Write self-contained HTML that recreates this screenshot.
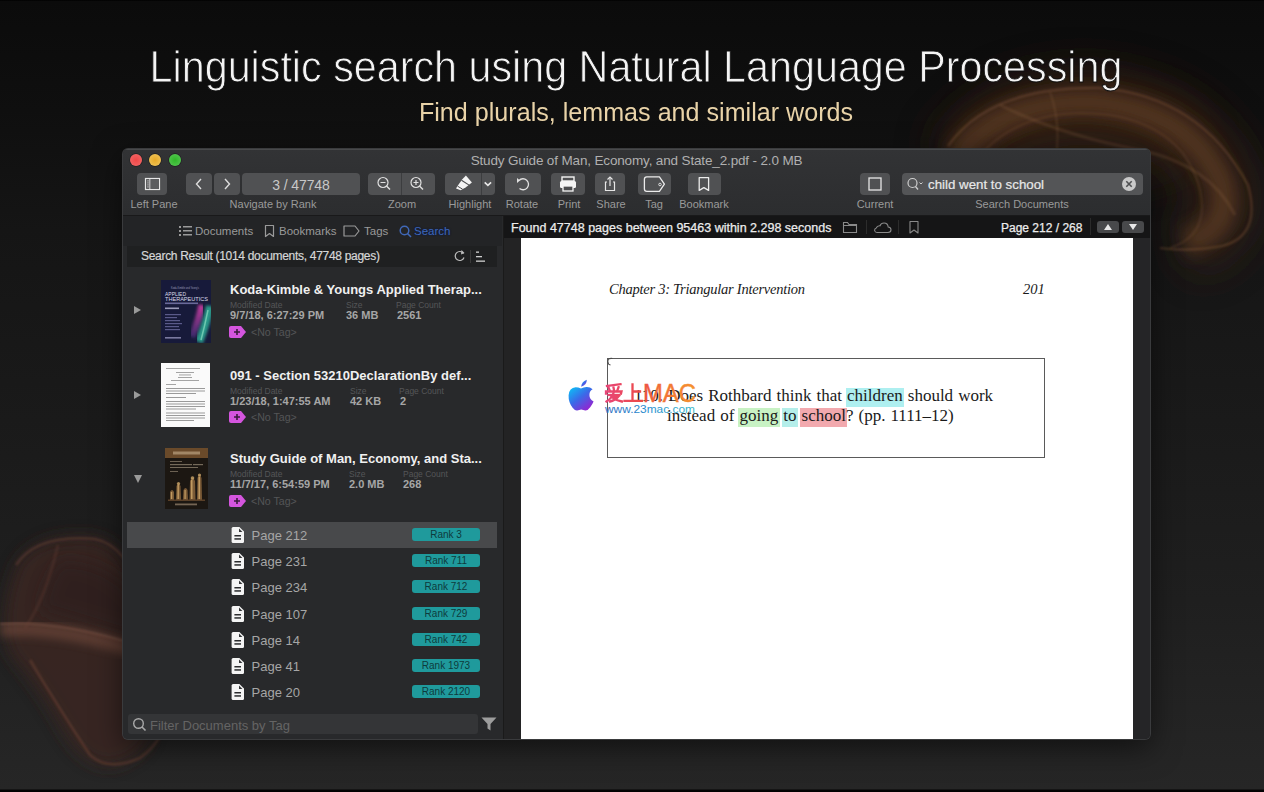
<!DOCTYPE html>
<html><head><meta charset="utf-8">
<style>
*{box-sizing:border-box;margin:0;padding:0}
html,body{width:1264px;height:792px;overflow:hidden}
body{position:relative;font-family:"Liberation Sans",sans-serif;background:linear-gradient(to bottom,#000 0px,#0b0b0b 1.5px,#0f0f0f 110px,#151515 230px,#1a1a1a 420px,#1f1f1f 600px,#262626 789px,#040404 790px,#000 792px)}
.a{position:absolute;white-space:nowrap}
#title{left:4px;width:1264px;top:41px;text-align:center;color:#f4f4f4;font-size:44px;line-height:52px;transform:scaleX(0.938);-webkit-text-stroke:0.9px #0f0f0f}
#sub{left:4px;width:1264px;top:95px;text-align:center;color:#e9d3a8;font-size:26px;line-height:34px;transform:scaleX(0.966)}
#win{left:123px;top:149px;width:1027px;height:590px;background:#28292b;border-radius:5px;overflow:hidden;box-shadow:0 0 0 1px #3a3b3d,0 8px 30px rgba(0,0,0,0.55)}
#tb{left:0;top:0;width:1027px;height:66px;background:linear-gradient(#323335,#2c2d2f);box-shadow:inset 0 1px 0 #48494b}
.dot{position:absolute;top:5px;width:12px;height:12px;border-radius:50%;box-shadow:0 0 0 0.7px rgba(0,0,0,0.35)}
.wtitle{left:0;width:1027px;top:3px;text-align:center;color:#b0b0b0;font-size:13.5px;line-height:16px;letter-spacing:-0.15px;top:4px}
.btn{position:absolute;top:24px;height:22px;background:#505153;border-radius:4px}
.btn svg{position:absolute;left:0;top:0}
.lbl{position:absolute;top:48px;width:120px;margin-left:-60px;color:#9a9a9a;font-size:11px;line-height:14px;text-align:center;white-space:nowrap}
#lp{left:0;top:66px;width:379px;height:524px;background:#28292b}
.tab{top:9px;color:#9a9a9a;font-size:11.5px;line-height:14px}
.tri{width:0;height:0;border-left:7px solid #9a9a9a;border-top:4.5px solid transparent;border-bottom:4.5px solid transparent}
.trid{width:0;height:0;border-top:8px solid #9a9a9a;border-left:4.5px solid transparent;border-right:4.5px solid transparent}
.dt{color:#f0f0f0;font-size:13px;font-weight:bold;line-height:16px}
.ml{color:#555658;font-size:8.5px;line-height:10px}
.mv{color:#a6a6a6;font-size:11px;font-weight:bold;line-height:13px}
.nt{color:#545557;font-size:10.6px;line-height:12px}
.pg{color:#a6a6a6;font-size:13px;line-height:26px;margin-top:1px}
.rk{width:68px;height:13px;background:#1f9a9c;border-radius:3px;color:#0e3b3c;font-size:10px;line-height:13px;text-align:center}
.cov1{background:linear-gradient(160deg,#1e2250 0%,#1a1e44 40%,#2a3a60 60%,#5a2a6a 75%,#2a6a6a 85%,#1a2a40 100%)}
.cov2{background:#fafafa}
.cov3{background:linear-gradient(#5a3a20 0%,#5a3a20 18%,#1e1a16 20%,#2a2218 60%,#6a4a28 80%,#2a2015 100%)}
#ct{left:380px;top:66px;width:647px;height:524px;background:#232324;border-left:1px solid #1a1a1a}
.ser{font-family:"Liberation Serif",serif;color:#1a1a1a;word-spacing:0.8px}
.hl{padding:0 1.5px 2px;margin:0 -1.5px}
</style></head><body>
<svg class="a" style="left:0;top:0" width="1264" height="792">
<defs>
<filter id="b8" x="-30%" y="-30%" width="160%" height="160%"><feGaussianBlur stdDeviation="8"/></filter>
<filter id="b4" x="-30%" y="-30%" width="160%" height="160%"><feGaussianBlur stdDeviation="4"/></filter>
<filter id="b1" x="-20%" y="-20%" width="140%" height="140%"><feGaussianBlur stdDeviation="1.2"/></filter>
<filter id="b20" x="-50%" y="-50%" width="200%" height="200%"><feGaussianBlur stdDeviation="20"/></filter>
</defs>
<g>
<ellipse cx="1085" cy="140" rx="115" ry="45" fill="#3a2618" opacity="0.55" filter="url(#b20)"/>
<path d="M955 165 Q995 100 1090 100 Q1190 108 1222 178 Q1238 228 1185 245" fill="none" stroke="#3a2416" stroke-width="60" opacity="0.7" filter="url(#b20)"/>
<path d="M955 160 Q995 102 1090 102 Q1188 110 1220 180 Q1236 228 1185 243" fill="none" stroke="#5a3a22" stroke-width="26" opacity="0.75" filter="url(#b8)"/>
<path d="M948 146 Q990 86 1100 88 Q1200 96 1248 185 Q1262 236 1222 246 Q1190 252 1160 248" fill="none" stroke="#8a5c3a" stroke-width="2.2" opacity="0.4" filter="url(#b1)"/>
<path d="M985 150 Q1030 105 1110 115 Q1185 128 1200 190 Q1210 235 1170 248" fill="none" stroke="#7a5234" stroke-width="2" opacity="0.3" filter="url(#b1)"/>
<path d="M1000 105 Q1060 135 1140 150 Q1210 165 1235 215" fill="none" stroke="#8a6242" stroke-width="3" opacity="0.25" filter="url(#b1)"/>
<path d="M1050 92 Q1062 125 1055 165" fill="none" stroke="#8a6242" stroke-width="2" opacity="0.25" filter="url(#b1)"/>
</g>
<g>
<path d="M16 565 Q35 532 95 537 Q130 545 140 600 L150 700 Q165 750 115 766 Q85 770 62 730 Q40 690 10 655 Q-5 620 16 565Z" fill="#3a2520" opacity="0.85" filter="url(#b8)"/>
<path d="M60 560 Q110 560 140 600 L140 640 Q80 620 40 610 Q45 580 60 560Z" fill="#2a1d1a" opacity="0.5" filter="url(#b8)"/>
<path d="M0 630 Q60 625 140 652" fill="none" stroke="#7a5040" stroke-width="14" opacity="0.55" filter="url(#b4)"/>
<path d="M0 624 Q60 620 140 646" fill="none" stroke="#9a6a58" stroke-width="2" opacity="0.35" filter="url(#b1)"/>
<path d="M16 565 Q36 534 95 539 Q128 546 140 596" fill="none" stroke="#7a4a3c" stroke-width="2.5" opacity="0.4" filter="url(#b1)"/>
<path d="M30 660 Q60 710 90 755 Q108 772 140 758 Q165 740 172 705" fill="none" stroke="#7a4636" stroke-width="2.5" opacity="0.45" filter="url(#b1)"/>
<path d="M58 545 Q45 600 25 628" fill="none" stroke="#6a4034" stroke-width="3" opacity="0.3" filter="url(#b1)"/>
</g>
</svg>
<div class="a" id="title">Linguistic search using Natural Language Processing</div>
<div class="a" id="sub">Find plurals, lemmas and similar words</div>
<div class="a" id="win">
  <div class="a" id="tb">
    <div class="dot" style="left:7px;background:radial-gradient(#f04848,#f26a6a)"></div>
    <div class="dot" style="left:26px;background:radial-gradient(#e8aa28,#f0c860)"></div>
    <div class="dot" style="left:46px;background:radial-gradient(#30b828,#5ac858)"></div>
    <div class="a wtitle">Study Guide of Man, Economy, and State_2.pdf - 2.0 MB</div>
    <div class="btn" style="left:14px;width:30px"><svg width="30" height="22"><rect x="8.5" y="5.5" width="14" height="11" fill="none" stroke="#e6e6e6" stroke-width="1.2"/><line x1="13" y1="5.5" x2="13" y2="16.5" stroke="#e6e6e6" stroke-width="1.2"/><rect x="13.5" y="6" width="8.5" height="10" fill="#5c5d5f"/><g fill="#bdbdbd"><rect x="10" y="7.5" width="2" height="0.9"/><rect x="10" y="9.5" width="2" height="0.9"/><rect x="10" y="11.5" width="2" height="0.9"/><rect x="10" y="13.5" width="2" height="0.9"/></g></svg></div>
    <div class="lbl" style="left:31px">Left Pane</div>
    <div class="btn" style="left:63px;width:26px"><svg width="26" height="22"><path d="M15 6 L10.5 11 L15 16" fill="none" stroke="#dcdcdc" stroke-width="1.4"/></svg></div>
    <div class="btn" style="left:91px;width:26px"><svg width="26" height="22"><path d="M11 6 L15.5 11 L11 16" fill="none" stroke="#dcdcdc" stroke-width="1.4"/></svg></div>
    <div class="btn" style="left:119px;width:118px;color:#c8c8c8;font-size:14px;line-height:24px;text-align:center;letter-spacing:-0.1px">3 / 47748</div>
    <div class="lbl" style="left:150px">Navigate by Rank</div>
    <div class="btn" style="left:245px;width:67px"><div style="position:absolute;left:33px;top:0;width:1px;height:22px;background:#3c3d3f"></div><svg width="67" height="22"><circle cx="15" cy="9.5" r="5" fill="none" stroke="#e0e0e0" stroke-width="1.2"/><line x1="12.5" y1="9.5" x2="17.5" y2="9.5" stroke="#e0e0e0" stroke-width="1.2"/><line x1="18.5" y1="13" x2="22" y2="16.5" stroke="#e0e0e0" stroke-width="1.4"/><circle cx="48" cy="9.5" r="5" fill="none" stroke="#e0e0e0" stroke-width="1.2"/><line x1="45.5" y1="9.5" x2="50.5" y2="9.5" stroke="#e0e0e0" stroke-width="1.2"/><line x1="48" y1="7" x2="48" y2="12" stroke="#e0e0e0" stroke-width="1.2"/><line x1="51.5" y1="13" x2="55" y2="16.5" stroke="#e0e0e0" stroke-width="1.4"/></svg></div>
    <div class="lbl" style="left:279px">Zoom</div>
    <div class="btn" style="left:322px;width:50px"><div style="position:absolute;left:36px;top:0;width:1px;height:22px;background:#3c3d3f"></div><svg width="50" height="22"><path d="M20.9 2.6 L26.9 9.4 L20.9 14.2 L15.7 17.3 L11 15.6 L12.9 12.5 L17.1 6.4 Z" fill="#f4f4f4"/><path d="M16.5 7.2 L24.5 12.4" stroke="#4b4c4e" stroke-width="1.1"/><path d="M12.6 13.2 L17.6 16.2" stroke="#4b4c4e" stroke-width="1"/><path d="M39.7 9.4 L42.9 12.4 L46.1 9.4" fill="none" stroke="#e8e8e8" stroke-width="1.6"/></svg></div>
    <div class="lbl" style="left:347px">Highlight</div>
    <div class="btn" style="left:382px;width:36px"><svg width="36" height="22"><path d="M14 7.5 A5.5 5.5 0 1 1 14.5 15.5" fill="none" stroke="#e0e0e0" stroke-width="1.3"/><path d="M12 5 L15 7.5 L12 10 Z" fill="#e0e0e0"/></svg></div>
    <div class="lbl" style="left:399px">Rotate</div>
    <div class="btn" style="left:428px;width:34px"><svg width="34" height="22"><rect x="11" y="4" width="12" height="4" fill="none" stroke="#f4f4f4" stroke-width="1.4"/><rect x="9" y="8" width="16" height="7" rx="1.5" fill="#f4f4f4"/><rect x="12" y="13" width="10" height="5" fill="#4b4c4e" stroke="#f4f4f4" stroke-width="1.3"/></svg></div>
    <div class="lbl" style="left:446px">Print</div>
    <div class="btn" style="left:472px;width:30px"><svg width="30" height="22"><path d="M12 9 L10.5 9 L10.5 17.5 L19.5 17.5 L19.5 9 L18 9" fill="none" stroke="#e6e6e6" stroke-width="1.2"/><line x1="15" y1="4" x2="15" y2="13" stroke="#e6e6e6" stroke-width="1.2"/><path d="M12.5 6.5 L15 4 L17.5 6.5" fill="none" stroke="#e6e6e6" stroke-width="1.2"/></svg></div>
    <div class="lbl" style="left:488px">Share</div>
    <div class="btn" style="left:515px;width:33px"><svg width="33" height="22"><path d="M8.8 3.8 L21.4 3.8 L26.4 11.2 L21.4 18.4 L8.8 18.4 Q6.4 18.4 6.4 16 L6.4 6.2 Q6.4 3.8 8.8 3.8 Z" fill="none" stroke="#ececec" stroke-width="1.3" stroke-linejoin="round"/><circle cx="22" cy="11.5" r="1.3" fill="none" stroke="#e6e6e6" stroke-width="0.9"/></svg></div>
    <div class="lbl" style="left:531px">Tag</div>
    <div class="btn" style="left:565px;width:33px"><svg width="33" height="22"><path d="M11.2 4.6 L20.6 4.6 L20.6 17.4 L15.9 14.6 L11.2 17.4 Z" fill="none" stroke="#ececec" stroke-width="1.3" stroke-linejoin="round"/></svg></div>
    <div class="lbl" style="left:581px">Bookmark</div>
    <div class="btn" style="left:737px;width:30px"><svg width="30" height="22"><rect x="9" y="5" width="12" height="12" fill="none" stroke="#e6e6e6" stroke-width="1.3"/></svg></div>
    <div class="lbl" style="left:752px">Current</div>
    <div class="btn" style="left:779px;width:241px;background:#545557"><svg width="40" height="22"><circle cx="10.5" cy="10" r="4.5" fill="none" stroke="#cfcfcf" stroke-width="1.2"/><line x1="13.5" y1="13.5" x2="16" y2="16.5" stroke="#cfcfcf" stroke-width="1.3"/><path d="M17.5 9.5 L19 11 L20.5 9.5" fill="none" stroke="#cfcfcf" stroke-width="1"/></svg><div class="a" style="left:26px;top:1px;color:#e8e8e8;font-size:13.3px;line-height:22px;-webkit-text-stroke:0.2px #e8e8e8">child went to school</div><svg width="16" height="16" style="left:219px;top:3px"><circle cx="8" cy="8" r="7" fill="#c9c9c9"/><path d="M5.3 5.3 L10.7 10.7 M10.7 5.3 L5.3 10.7" stroke="#4f5052" stroke-width="1.6"/></svg></div>
    <div class="lbl" style="left:899px">Search Documents</div>
  </div>
  <div class="a" id="lp">
    <!-- tabs: page y 215-245 => lp y 0-30 -->
    <div class="a" style="left:0;top:0;width:379px;height:31px;background:#232426"></div>
    <svg class="a" style="left:56px;top:10px" width="14" height="12"><g fill="#9a9a9a"><rect x="0" y="1" width="2" height="2"/><rect x="0" y="5" width="2" height="2"/><rect x="0" y="9" width="2" height="2"/><rect x="4" y="1" width="9" height="1.5"/><rect x="4" y="5" width="9" height="1.5"/><rect x="4" y="9" width="9" height="1.5"/></g></svg>
    <div class="a tab" style="left:72px">Documents</div>
    <svg class="a" style="left:141px;top:9px" width="12" height="14"><path d="M1.5 1.5 L9.5 1.5 L9.5 12.5 L5.5 9.5 L1.5 12.5 Z" fill="none" stroke="#9a9a9a" stroke-width="1.2" stroke-linejoin="round"/></svg>
    <div class="a tab" style="left:156px">Bookmarks</div>
    <svg class="a" style="left:220px;top:10px" width="18" height="12"><path d="M1 1 L12 1 L16 6 L12 11 L1 11 Z" fill="none" stroke="#9a9a9a" stroke-width="1.2" stroke-linejoin="round"/></svg>
    <div class="a tab" style="left:241px">Tags</div>
    <svg class="a" style="left:275.5px;top:10px" width="14" height="14"><circle cx="5.5" cy="5.5" r="4.3" fill="none" stroke="#4068b8" stroke-width="1.5"/><line x1="8.5" y1="8.5" x2="12" y2="12" stroke="#4068b8" stroke-width="1.6"/></svg>
    <div class="a tab" style="left:291px;color:#4068b8;text-shadow:0 0 2px #0c1c48,0 0 1px #0c1c48">Search</div>
    <!-- search result header: page y 246.5-267 -->
    <div class="a" style="left:4px;top:31px;width:370px;height:21px;background:#1f2021"></div>
    <div class="a" style="left:18px;top:31px;color:#d6d6d6;font-size:12px;line-height:21px;letter-spacing:-0.3px;-webkit-text-stroke:0.2px #d6d6d6">Search Result (1014 documents, 47748 pages)</div>
    <svg class="a" style="left:328px;top:33px" width="40" height="17"><path d="M12.5 5.5 A4.5 4.5 0 1 0 13 9.5" fill="none" stroke="#bdbdbd" stroke-width="1.2"/><path d="M10.5 2 L13.5 5 L10 6.5 Z" fill="#bdbdbd"/><line x1="19.5" y1="2" x2="19.5" y2="15" stroke="#3a3a3a" stroke-width="1"/><rect x="25" y="3.5" width="3" height="1.3" fill="#cfcfcf"/><rect x="25" y="8" width="6" height="1.3" fill="#cfcfcf"/><rect x="25" y="12.5" width="9" height="1.3" fill="#cfcfcf"/></svg>
    <!-- docs -->
    <svg class="a" style="left:38px;top:65px" width="50" height="63"><defs><linearGradient id="pk" x1="0" y1="0" x2="0" y2="1"><stop offset="0" stop-color="#c03a9a"/><stop offset="1" stop-color="#3a2a6a"/></linearGradient><filter id="cb"><feGaussianBlur stdDeviation="1.6"/></filter></defs><rect width="50" height="63" fill="#171a3a"/>
<path d="M41 25 Q38 40 31 57" stroke="url(#pk)" stroke-width="7" fill="none" filter="url(#cb)"/><path d="M49 26 Q46 42 38 62" stroke="#2a9a8a" stroke-width="8" fill="none" filter="url(#cb)"/><path d="M47 30 Q44 45 40 60" stroke="#8adcc0" stroke-width="1.5" fill="none" opacity="0.7"/>
<text x="10" y="9.2" font-family="Liberation Sans" font-size="2.6" fill="#9a9ab8" textLength="28" lengthAdjust="spacingAndGlyphs">Koda-Kimble and Young's</text><text x="4" y="15.6" font-family="Liberation Sans" font-size="5.2" fill="#dcdcec" textLength="21" lengthAdjust="spacingAndGlyphs">APPLIED</text><text x="4" y="20.8" font-family="Liberation Sans" font-size="5.2" fill="#dcdcec" textLength="43" lengthAdjust="spacingAndGlyphs">THERAPEUTICS</text><rect x="4" y="22.5" width="33" height="1.6" fill="#6a6a9a"/><rect x="4" y="27.5" width="14" height="1.6" fill="#9a9ab8"/>
<g fill="#5a5a8a"><rect x="4" y="34" width="16" height="1.2"/><rect x="4" y="37" width="12" height="1.2"/><rect x="4" y="40" width="15" height="1.2"/><rect x="4" y="43" width="17" height="1.2"/><rect x="4" y="46" width="14" height="1.2"/><rect x="4" y="49" width="15" height="1.2"/></g><rect x="4" y="57" width="16" height="1.6" fill="#7a7aa0"/></svg>
    <div class="a tri" style="left:11px;top:91px"></div>
    <div class="a dt" style="left:107px;top:67px">Koda-Kimble &amp; Youngs Applied Therap...</div>
    <div class="a ml" style="left:107px;top:85px">Modified Date</div><div class="a ml" style="left:223px;top:85px">Size</div><div class="a ml" style="left:273px;top:85px">Page Count</div>
    <div class="a mv" style="left:107px;top:94px">9/7/18, 6:27:29 PM</div><div class="a mv" style="left:223px;top:94px">36 MB</div><div class="a mv" style="left:274px;top:94px">2561</div>
    <svg class="a tg" style="left:106px;top:111px" width="18" height="12"><path d="M2 0 L12 0 L17 6 L12 12 L2 12 Q0 12 0 10 L0 2 Q0 0 2 0Z" fill="#d455de"/><path d="M5 6 L11 6 M8 3 L8 9" stroke="#3a1a3c" stroke-width="1.6"/></svg>
    <div class="a nt" style="left:128px;top:111px">&lt;No Tag&gt;</div>

    <svg class="a" style="left:38px;top:148px" width="49" height="64"><rect width="49" height="64" fill="#fafafa"/><g fill="#9a9a9a"><rect x="5" y="5" width="34" height="0.9"/><rect x="15" y="9" width="18" height="0.9"/><rect x="18" y="11.5" width="12" height="0.9"/><rect x="17" y="14" width="14" height="0.9"/><rect x="10" y="17" width="28" height="0.9"/><rect x="5" y="21" width="10" height="0.9"/></g><g fill="#9a9a9a"><rect x="5" y="25" width="39" height="1"/><rect x="5" y="27.5" width="39" height="1"/><rect x="5" y="30" width="30" height="1"/><rect x="5" y="34" width="20" height="1"/><rect x="5" y="38" width="39" height="1"/><rect x="5" y="40.5" width="39" height="1"/><rect x="5" y="43" width="39" height="1"/><rect x="5" y="45.5" width="30" height="1"/><rect x="5" y="49.5" width="39" height="1"/><rect x="5" y="52" width="39" height="1"/><rect x="5" y="54.5" width="39" height="1"/><rect x="5" y="57" width="28" height="1"/></g></svg>
    <div class="a tri" style="left:11px;top:176px"></div>
    <div class="a dt" style="left:107px;top:153px">091 - Section 53210DeclarationBy def...</div>
    <div class="a ml" style="left:107px;top:171px">Modified Date</div><div class="a ml" style="left:227px;top:171px">Size</div><div class="a ml" style="left:276px;top:171px">Page Count</div>
    <div class="a mv" style="left:107px;top:180px">1/23/18, 1:47:55 AM</div><div class="a mv" style="left:227px;top:180px">42 KB</div><div class="a mv" style="left:277px;top:180px">2</div>
    <svg class="a tg" style="left:106px;top:196px" width="18" height="12"><path d="M2 0 L12 0 L17 6 L12 12 L2 12 Q0 12 0 10 L0 2 Q0 0 2 0Z" fill="#d455de"/><path d="M5 6 L11 6 M8 3 L8 9" stroke="#3a1a3c" stroke-width="1.6"/></svg>
    <div class="a nt" style="left:128px;top:196px">&lt;No Tag&gt;</div>

    <svg class="a" style="left:42px;top:233px" width="43" height="61"><rect width="43" height="61" fill="#1c1712"/><rect width="43" height="10" fill="#6a4a2a"/><rect x="8" y="3.5" width="27" height="3" fill="#c8b090" opacity="0.6"/><g fill="#bfae95" opacity="0.55"><rect x="5" y="13" width="12" height="0.9"/><rect x="5" y="16" width="22" height="1.2"/><rect x="28" y="16" width="10" height="1.2"/><rect x="5" y="19" width="28" height="1"/><rect x="5" y="23" width="8" height="0.9"/></g>
<g fill="#7a5a36"><path d="M5 52 L5 44 Q7 40 9 44 L9 52Z"/><path d="M11 52 L11.5 38 Q13.5 33 15.5 38 L16 52Z"/><path d="M18 52 L18.5 42 Q20.5 38 22.5 42 L23 52Z"/><path d="M24.5 52 L25 33 Q27.5 27 30 33 L30.5 52Z"/><path d="M32 52 L32.5 30 Q34.5 24 36.5 30 L37 52Z"/></g>
<g fill="#d8b070" opacity="0.75"><rect x="6" y="44" width="1.2" height="7"/><rect x="12.5" y="37" width="1.4" height="14"/><rect x="19.5" y="42" width="1.2" height="9"/><rect x="26" y="32" width="1.5" height="19"/><rect x="33.5" y="29" width="1.5" height="22"/><circle cx="13.5" cy="35.5" r="1.6"/><circle cx="27.5" cy="30" r="1.8"/><circle cx="34.5" cy="27" r="1.6"/></g>
<rect x="3" y="51.5" width="37" height="1.5" fill="#5a4028"/><rect x="10" y="55.5" width="22" height="1.8" fill="#b09a80" opacity="0.6"/></svg>
    <div class="a trid" style="left:11px;top:260px"></div>
    <div class="a dt" style="left:107px;top:236px">Study Guide of Man, Economy, and Sta...</div>
    <div class="a ml" style="left:107px;top:254px">Modified Date</div><div class="a ml" style="left:226px;top:254px">Size</div><div class="a ml" style="left:280px;top:254px">Page Count</div>
    <div class="a mv" style="left:107px;top:263px">11/7/17, 6:54:59 PM</div><div class="a mv" style="left:226px;top:263px">2.0 MB</div><div class="a mv" style="left:280px;top:263px">268</div>
    <svg class="a tg" style="left:106px;top:280px" width="18" height="12"><path d="M2 0 L12 0 L17 6 L12 12 L2 12 Q0 12 0 10 L0 2 Q0 0 2 0Z" fill="#d455de"/><path d="M5 6 L11 6 M8 3 L8 9" stroke="#3a1a3c" stroke-width="1.6"/></svg>
    <div class="a nt" style="left:128px;top:280px">&lt;No Tag&gt;</div>

    <!-- pages -->
    <div class="a" style="left:4px;top:307px;width:370px;height:26px;background:#48494b"></div>
    <svg class="a" style="left:108px;top:312px" width="14" height="16"><path d="M0.6 1.5 Q0.6 0 2.1 0 L8.4 0 L13 4.6 L13 14.5 Q13 16 11.5 16 L2.1 16 Q0.6 16 0.6 14.5 Z" fill="#f4f4f4"/><path d="M8 1.6 L11.4 5 L8 5 Z" fill="#333436"/><rect x="3.4" y="8" width="6.6" height="1.5" fill="#2a2b2d"/><rect x="3.4" y="11.2" width="6.6" height="1.5" fill="#2a2b2d"/></svg>
    <div class="a pg" style="left:128.5px;top:307px">Page 212</div>
    <div class="a rk" style="left:289px;top:313px">Rank 3</div>
    <svg class="a" style="left:108px;top:338px" width="14" height="16"><path d="M0.6 1.5 Q0.6 0 2.1 0 L8.4 0 L13 4.6 L13 14.5 Q13 16 11.5 16 L2.1 16 Q0.6 16 0.6 14.5 Z" fill="#f4f4f4"/><path d="M8 1.6 L11.4 5 L8 5 Z" fill="#333436"/><rect x="3.4" y="8" width="6.6" height="1.5" fill="#2a2b2d"/><rect x="3.4" y="11.2" width="6.6" height="1.5" fill="#2a2b2d"/></svg>
    <div class="a pg" style="left:128.5px;top:333px">Page 231</div>
    <div class="a rk" style="left:289px;top:339px">Rank 711</div>
    <svg class="a" style="left:108px;top:364px" width="14" height="16"><path d="M0.6 1.5 Q0.6 0 2.1 0 L8.4 0 L13 4.6 L13 14.5 Q13 16 11.5 16 L2.1 16 Q0.6 16 0.6 14.5 Z" fill="#f4f4f4"/><path d="M8 1.6 L11.4 5 L8 5 Z" fill="#333436"/><rect x="3.4" y="8" width="6.6" height="1.5" fill="#2a2b2d"/><rect x="3.4" y="11.2" width="6.6" height="1.5" fill="#2a2b2d"/></svg>
    <div class="a pg" style="left:128.5px;top:359px">Page 234</div>
    <div class="a rk" style="left:289px;top:365px">Rank 712</div>
    <svg class="a" style="left:108px;top:391px" width="14" height="16"><path d="M0.6 1.5 Q0.6 0 2.1 0 L8.4 0 L13 4.6 L13 14.5 Q13 16 11.5 16 L2.1 16 Q0.6 16 0.6 14.5 Z" fill="#f4f4f4"/><path d="M8 1.6 L11.4 5 L8 5 Z" fill="#333436"/><rect x="3.4" y="8" width="6.6" height="1.5" fill="#2a2b2d"/><rect x="3.4" y="11.2" width="6.6" height="1.5" fill="#2a2b2d"/></svg>
    <div class="a pg" style="left:128.5px;top:386px">Page 107</div>
    <div class="a rk" style="left:289px;top:392px">Rank 729</div>
    <svg class="a" style="left:108px;top:417px" width="14" height="16"><path d="M0.6 1.5 Q0.6 0 2.1 0 L8.4 0 L13 4.6 L13 14.5 Q13 16 11.5 16 L2.1 16 Q0.6 16 0.6 14.5 Z" fill="#f4f4f4"/><path d="M8 1.6 L11.4 5 L8 5 Z" fill="#333436"/><rect x="3.4" y="8" width="6.6" height="1.5" fill="#2a2b2d"/><rect x="3.4" y="11.2" width="6.6" height="1.5" fill="#2a2b2d"/></svg>
    <div class="a pg" style="left:128.5px;top:412px">Page 14</div>
    <div class="a rk" style="left:289px;top:418px">Rank 742</div>
    <svg class="a" style="left:108px;top:443px" width="14" height="16"><path d="M0.6 1.5 Q0.6 0 2.1 0 L8.4 0 L13 4.6 L13 14.5 Q13 16 11.5 16 L2.1 16 Q0.6 16 0.6 14.5 Z" fill="#f4f4f4"/><path d="M8 1.6 L11.4 5 L8 5 Z" fill="#333436"/><rect x="3.4" y="8" width="6.6" height="1.5" fill="#2a2b2d"/><rect x="3.4" y="11.2" width="6.6" height="1.5" fill="#2a2b2d"/></svg>
    <div class="a pg" style="left:128.5px;top:438px">Page 41</div>
    <div class="a rk" style="left:289px;top:444px">Rank 1973</div>
    <svg class="a" style="left:108px;top:469px" width="14" height="16"><path d="M0.6 1.5 Q0.6 0 2.1 0 L8.4 0 L13 4.6 L13 14.5 Q13 16 11.5 16 L2.1 16 Q0.6 16 0.6 14.5 Z" fill="#f4f4f4"/><path d="M8 1.6 L11.4 5 L8 5 Z" fill="#333436"/><rect x="3.4" y="8" width="6.6" height="1.5" fill="#2a2b2d"/><rect x="3.4" y="11.2" width="6.6" height="1.5" fill="#2a2b2d"/></svg>
    <div class="a pg" style="left:128.5px;top:464px">Page 20</div>
    <div class="a rk" style="left:289px;top:470px">Rank 2120</div>
    <!-- filter -->
    <div class="a" style="left:5px;top:499px;width:350px;height:20px;background:#343537;border-radius:3px"></div>
    <svg class="a" style="left:9px;top:502px" width="16" height="16"><circle cx="6.5" cy="6.5" r="4.8" fill="none" stroke="#a8a8a8" stroke-width="1.4"/><line x1="10" y1="10" x2="13.5" y2="13.5" stroke="#a8a8a8" stroke-width="1.6"/></svg>
    <div class="a" style="left:27px;top:500px;color:#646464;font-size:13px;line-height:21px">Filter Documents by Tag</div>
    <svg class="a" style="left:358px;top:502px" width="16" height="14"><path d="M0.5 0.5 L15.5 0.5 L9.5 7 L9.5 13.5 L6.5 11.5 L6.5 7 Z" fill="#9d9d9d"/></svg>
  </div>
  <div class="a" id="ct">
    <div class="a" style="left:0;top:0;width:647px;height:23px;background:#151516"></div>
    <div class="a" style="left:7px;top:2px;color:#ececec;font-size:12.5px;line-height:23px;-webkit-text-stroke:0.25px #ececec">Found 47748 pages between 95463 within 2.298 seconds</div>
    <svg class="a" style="left:338px;top:5px" width="82" height="14"><path d="M1.5 3 L1.5 12.5 L14.5 12.5 L14.5 4.5 L7 4.5 L5.5 2.5 L1.5 2.5 Z" fill="none" stroke="#8a8a8a" stroke-width="1.1"/><line x1="1.5" y1="5.5" x2="14.5" y2="5.5" stroke="#8a8a8a" stroke-width="1"/><line x1="24.5" y1="0" x2="24.5" y2="14" stroke="#2c2c2c"/><path d="M35 12.5 L46 12.5 Q49 12.5 49 9.8 Q49 7.2 46.2 7 Q45.8 3 42 3 Q39 3 38 5.8 Q35.2 5.6 34.2 8 Q32.4 8.6 32.6 10.5 Q33 12.5 35 12.5Z" fill="none" stroke="#8a8a8a" stroke-width="1.1"/><line x1="56.5" y1="0" x2="56.5" y2="14" stroke="#2c2c2c"/><path d="M68 1.5 L76 1.5 L76 13 L72 10 L68 13 Z" fill="none" stroke="#8a8a8a" stroke-width="1.1" stroke-linejoin="round"/></svg>
    <div class="a" style="left:497px;top:2px;color:#ececec;font-size:12px;line-height:23px;-webkit-text-stroke:0.25px #ececec">Page 212 / 268</div>
    <div class="a" style="left:586px;top:3px;width:1px;height:17px;background:#2a2a2a"></div>
    <div class="a" style="left:593px;top:6px;width:22px;height:12px;background:#48494b;border-radius:3px"></div>
    <div class="a" style="left:618px;top:6px;width:22px;height:12px;background:#48494b;border-radius:3px"></div>
    <div class="a" style="left:600px;top:9px;width:0;height:0;border-bottom:6px solid #e8e8e8;border-left:4px solid transparent;border-right:4px solid transparent"></div>
    <div class="a" style="left:625px;top:9px;width:0;height:0;border-top:6px solid #e8e8e8;border-left:4px solid transparent;border-right:4px solid transparent"></div>
    <div class="a" id="pdf" style="left:17px;top:23px;width:612px;height:501px;background:#fff">
      <div class="a ser" style="left:88px;top:42.5px;font-style:italic;font-size:14.5px;line-height:16px;letter-spacing:-0.25px;word-spacing:0">Chapter 3: Triangular Intervention</div>
      <div class="a ser" style="left:502px;top:42.5px;font-style:italic;font-size:14.5px;line-height:16px">201</div>
      <div class="a" style="left:86px;top:120px;width:438px;height:100px;border:1px solid #5a5a5a"></div>
      <svg class="a" style="left:84px;top:118px" width="10" height="12"><path d="M7.5 2.5 Q3 1.8 2.8 5.5 Q2.8 8.5 5.5 9" fill="none" stroke="#4a4a4a" stroke-width="1.1"/></svg>
      <div class="a ser" style="left:113px;top:148px;font-size:17px;line-height:20px">110. Does Rothbard think that <span class="hl" style="background:linear-gradient(transparent 2px,#aeeff0 2px)">children</span> should work</div>
      <div class="a ser" style="left:146px;top:168px;font-size:17px;line-height:20px">instead of <span class="hl" style="background:linear-gradient(transparent 2px,#c8f2c4 2px)">going</span> <span class="hl" style="background:linear-gradient(transparent 2px,#b4eeea 2px)">to</span> <span class="hl" style="background:linear-gradient(transparent 2px,#f2a9ae 2px)">school</span>? (pp. 1111–12)</div>
      <!-- watermark -->
      <svg class="a" style="left:46.5px;top:140.5px" width="27" height="32" viewBox="0 0 27 32"><defs><linearGradient id="ap" x1="0.1" y1="0.1" x2="0.8" y2="0.95"><stop offset="0" stop-color="#12b4f4"/><stop offset="0.45" stop-color="#3a6ae8"/><stop offset="1" stop-color="#9424d0"/></linearGradient></defs><path d="M13.2 7.8 Q13.4 3 18.8 0.8 Q19 5.8 13.2 7.8 Z" fill="url(#ap)"/><path d="M13 9.5 Q10.3 8.2 7.6 8.2 Q1.2 8.6 0.6 16.2 Q0.3 23 4.6 28.8 Q6.9 31.8 9.2 31.5 Q11.2 31.1 13.2 30.5 Q15.3 31.1 17.3 31.4 Q19.8 31.6 22.2 28.2 Q24.4 25.2 25.6 22.4 Q21.4 20.5 21.4 16 Q21.4 12 24.6 10.3 Q22 7.8 18.4 8 Q15.8 8.3 13 9.5 Z" fill="url(#ap)"/></svg>
      <svg class="a" style="left:83px;top:145px" width="94" height="32" viewBox="0 0 94 32"><defs><linearGradient id="wm" gradientUnits="userSpaceOnUse" x1="0" y1="0" x2="92" y2="0"><stop offset="0" stop-color="#e8457a"/><stop offset="0.4" stop-color="#ec4a48"/><stop offset="0.55" stop-color="#f06a3a"/><stop offset="1" stop-color="#f5942e"/></linearGradient><linearGradient id="ww" gradientUnits="userSpaceOnUse" x1="0" y1="0" x2="92" y2="0"><stop offset="0" stop-color="#2a6ac0"/><stop offset="0.5" stop-color="#2a90d0"/><stop offset="1" stop-color="#38b8c8"/></linearGradient></defs>
        <g fill="none" stroke="url(#wm)" stroke-width="2.3" stroke-linecap="square"><path d="M16.5 1.2 L3 3"/><path d="M4.5 4.5 L5.5 7 M9.5 4.5 L10 7 M14.5 4.3 L13.5 7"/><path d="M2 10.5 L2 8.5 L17.5 8.5 L17 10.5"/><path d="M4.5 12 L15.5 12"/><path d="M9.5 10 Q8 15 2.5 18.5"/><path d="M7.5 14 L14 14 Q11 17.5 6 18.5"/><path d="M9.5 15.5 Q13 17.5 18 18.5"/><path d="M28.5 1.5 L28.5 17.5 M28.5 8.5 L36 8.5 M20.5 17.8 L38 17.8"/></g>
        <text x="39" y="18.5" font-family="Liberation Sans" font-size="25" stroke="url(#wm)" stroke-width="0.4" fill="url(#wm)" textLength="53" lengthAdjust="spacingAndGlyphs">MAC</text>
        <text x="1" y="30" font-family="Liberation Sans" font-size="11" fill="url(#ww)" textLength="90" lengthAdjust="spacingAndGlyphs">www.23mac.com</text></svg>
    </div>
    <div class="a" style="left:629px;top:23px;width:18px;height:501px;background:#252527"></div>
  </div>
  <div class="a" style="left:0;top:66px;width:1027px;height:1px;background:#19191a"></div>
</div>
</body></html>
